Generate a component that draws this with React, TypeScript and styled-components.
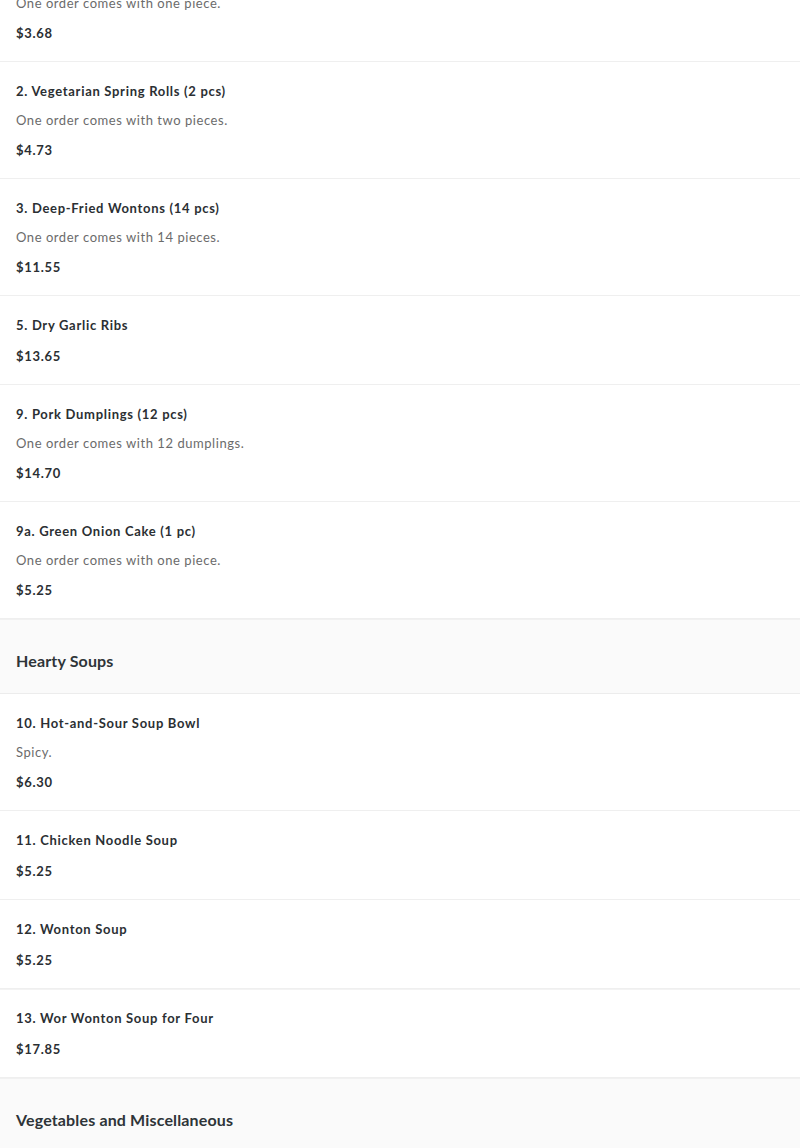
import React from 'react'
import styled, { createGlobalStyle } from 'styled-components';

type Item = { name: string; desc?: string; price: string; split?: boolean };
type Section = { title?: string; items: Item[] };

const sections: Section[] = [
  {
    items: [
      { name: '1. Egg Roll (1 pc)', desc: 'One order comes with one piece.', price: '$3.68' },
      { name: '2. Vegetarian Spring Rolls (2 pcs)', desc: 'One order comes with two pieces.', price: '$4.73' },
      { name: '3. Deep-Fried Wontons (14 pcs)', desc: 'One order comes with 14 pieces.', price: '$11.55' },
      { name: '5. Dry Garlic Ribs', price: '$13.65' },
      { name: '9. Pork Dumplings (12 pcs)', desc: 'One order comes with 12 dumplings.', price: '$14.70' },
      { name: '9a. Green Onion Cake (1 pc)', desc: 'One order comes with one piece.', price: '$5.25' },
    ],
  },
  {
    title: 'Hearty Soups',
    items: [
      { name: '10. Hot-and-Sour Soup Bowl', desc: 'Spicy.', price: '$6.30' },
      { name: '11. Chicken Noodle Soup', price: '$5.25' },
      { name: '12. Wonton Soup', price: '$5.25' },
      { name: '13. Wor Wonton Soup for Four', price: '$17.85', split: true },
    ],
  },
  { title: 'Vegetables and Miscellaneous', items: [] },
];

const App = () => {
  return (
    <>
      <GlobalStyle />
      <S.Menu>
        {sections.map((section, i) => (
          <S.Section key={i}>
            {section.title && <S.SectionHeader>{section.title}</S.SectionHeader>}
            {section.items.map((item) => (
              <S.Row key={item.name} $split={item.split}>
                <S.Name>{item.name}</S.Name>
                {item.desc && <S.Desc>{item.desc}</S.Desc>}
                <S.Price $noDesc={!item.desc}>{item.price}</S.Price>
              </S.Row>
            ))}
          </S.Section>
        ))}
      </S.Menu>
    </>
  )
}

const GlobalStyle = createGlobalStyle`
  html, body {
    margin: 0;
    padding: 0;
    background: #ffffff;
    overflow: hidden;
  }
  body {
    font-family: Lato, "Noto Sans", sans-serif;
    -webkit-font-smoothing: antialiased;
  }
`;

const S = {
  // page is scrolled a little: first item is partly above the fold
  Menu: styled.div`
    display: flex;
    flex-direction: column;
    width: 800px;
    margin-top: -55px;
  `,
  Section: styled.section`
    display: flex;
    flex-direction: column;
  `,
  SectionHeader: styled.h2`
    margin: 0;
    padding: 30px 16px 21px;
    background: #fafafa;
    border-top: 1px solid #f1f1f1;
    border-bottom: 1px solid #ececec;
    font-size: 16px;
    line-height: 22px;
    font-weight: 700;
    letter-spacing: 0.15px;
    color: #2e3438;
  `,
  Row: styled.div<{ $split?: boolean }>`
    display: flex;
    flex-direction: column;
    gap: 9px;
    padding: 19px 16px 18px;
    border-bottom: 1px solid #efefef;
    background: #ffffff;
    ${p => p.$split && `
      border-top: 1px solid #f3f3f3;
      padding-top: 18px;
    `}
  `,
  Name: styled.div`
    font-size: 13px;
    line-height: 20px;
    font-weight: 700;
    letter-spacing: 0.7px;
    color: #2b2f33;
  `,
  Desc: styled.div`
    font-size: 13px;
    line-height: 20px;
    font-weight: 400;
    letter-spacing: 0.55px;
    color: #6b6b6b;
  `,
  Price: styled.div<{ $noDesc?: boolean }>`
    margin-top: ${p => (p.$noDesc ? '2px' : '1px')};
    font-size: 13px;
    line-height: 20px;
    font-weight: 700;
    letter-spacing: 0.7px;
    color: #2b2f33;
  `,
}

export default App
